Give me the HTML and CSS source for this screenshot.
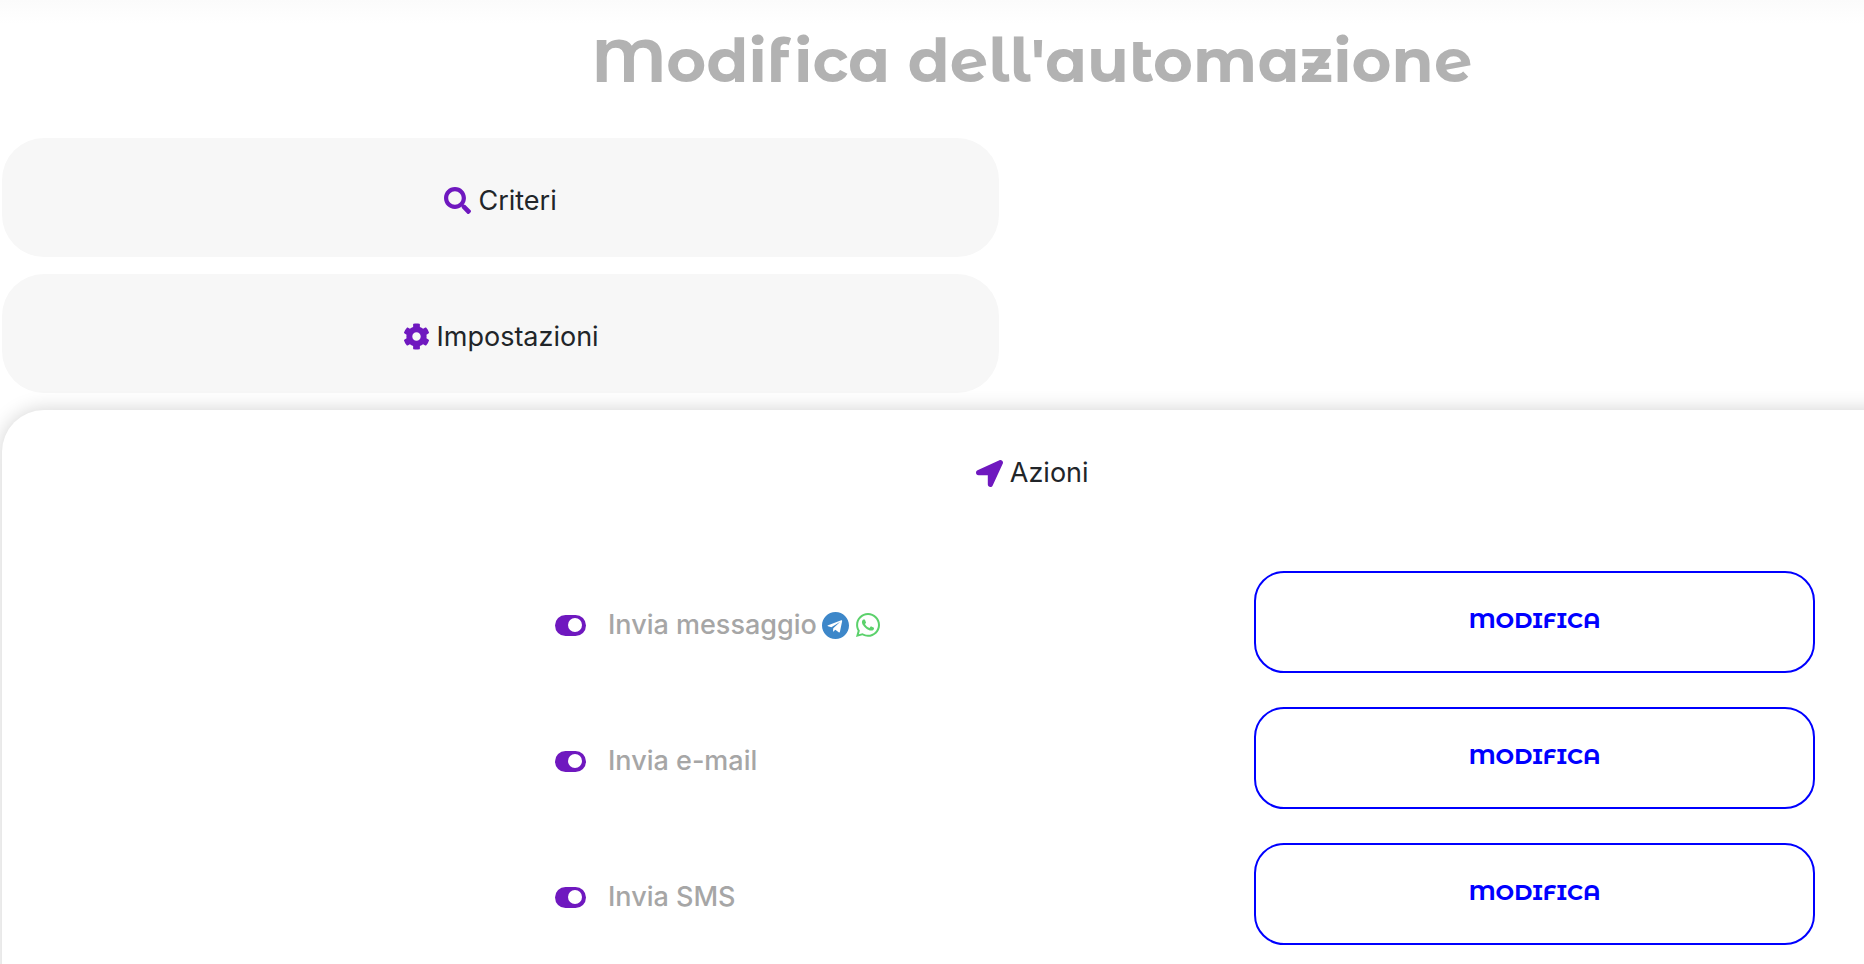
FILE: index.html
```html
<!DOCTYPE html>
<html lang="it">
<head>
    <meta charset="utf-8">
    <meta name="viewport" content="width=device-width, initial-scale=1">
    <title>Modifica dell'automazione</title>
    <link rel="stylesheet" href="styles.css">
</head>
<body>
<main class="page">
    <h1 class="page-title">Modifica dell'automazione</h1>

    <button type="button" class="tab">
        <svg class="icon" viewBox="0 0 512 512" aria-hidden="true"><path d="M505 442.7L405.3 343c-4.5-4.5-10.6-7-17-7H372c27.6-35.3 44-79.7 44-128C416 93.1 322.9 0 208 0S0 93.1 0 208s93.1 208 208 208c48.3 0 92.7-16.4 128-44v16.3c0 6.4 2.5 12.5 7 17l99.7 99.7c9.4 9.4 24.6 9.4 33.9 0l28.3-28.3c9.4-9.4 9.4-24.6.1-34zM208 336c-70.7 0-128-57.2-128-128 0-70.7 57.2-128 128-128 70.7 0 128 57.2 128 128 0 70.7-57.2 128-128 128z"/></svg>
        <span>Criteri</span>
    </button>

    <button type="button" class="tab">
        <svg class="icon" viewBox="0 0 512 512" aria-hidden="true"><path d="M487.4 315.7l-42.6-24.6c4.3-23.2 4.3-47 0-70.2l42.6-24.6c4.9-2.8 7.1-8.6 5.5-14-11.1-35.6-30-67.8-54.7-94.6-3.8-4.1-10-5.1-14.8-2.3L380.8 110c-17.9-15.4-38.5-27.3-60.8-35.1V25.8c0-5.6-3.9-10.5-9.4-11.7-36.7-8.2-74.3-7.8-109.2 0-5.5 1.2-9.4 6.1-9.4 11.7V75c-22.2 7.9-42.8 19.8-60.8 35.1L88.7 85.5c-4.9-2.8-11-1.9-14.8 2.3-24.7 26.7-43.6 58.9-54.7 94.6-1.7 5.4.6 11.2 5.5 14L67.3 221c-4.3 23.2-4.3 47 0 70.2l-42.6 24.6c-4.9 2.8-7.1 8.6-5.5 14 11.1 35.6 30 67.8 54.7 94.6 3.8 4.1 10 5.1 14.8 2.3l42.6-24.6c17.9 15.4 38.5 27.3 60.8 35.1v49.2c0 5.6 3.9 10.5 9.4 11.7 36.7 8.2 74.3 7.8 109.2 0 5.5-1.2 9.4-6.1 9.4-11.7v-49.2c22.2-7.9 42.8-19.8 60.8-35.1l42.6 24.6c4.9 2.8 11 1.9 14.8-2.3 24.7-26.7 43.6-58.9 54.7-94.6 1.5-5.5-.7-11.3-5.6-14.1zM256 336c-44.1 0-80-35.9-80-80s35.9-80 80-80 80 35.9 80 80-35.9 80-80 80z"/></svg>
        <span>Impostazioni</span>
    </button>

    <section class="panel">
        <h2 class="panel-title">
            <svg class="icon" viewBox="0 0 512 512" aria-hidden="true"><path d="M444.52 3.52L28.74 195.42c-47.97 22.39-31.98 92.75 19.19 92.75h175.91v175.91c0 51.17 70.36 67.17 92.75 19.19l191.9-415.78c15.99-38.39-25.59-79.97-63.97-63.97z"/></svg>
            <span>Azioni</span>
        </h2>

        <div class="action">
            <input type="checkbox" class="toggle" id="send-message" checked>
            <label class="action-label" for="send-message">Invia messaggio</label>
            <svg class="icon icon-telegram" viewBox="0 8 496 496" aria-hidden="true"><path d="M248 8C111 8 0 119 0 256s111 248 248 248 248-111 248-248S385 8 248 8zm121.8 169.9l-40.7 191.8c-3 13.6-11.1 16.9-22.4 10.5l-62-45.7-29.9 28.8c-3.3 3.3-6.1 6.1-12.5 6.1l4.4-63.1 114.9-103.8c5-4.4-1.1-6.9-7.7-2.5l-142 89.4-61.2-19.1c-13.3-4.2-13.6-13.3 2.8-19.7l239.1-92.2c11.1-4 20.8 2.7 17.2 19.5z"/></svg>
            <svg class="icon icon-whatsapp" viewBox="0 32 448 448" aria-hidden="true"><path d="M380.9 97.1C339 55.1 283.2 32 223.9 32c-122.4 0-222 99.6-222 222 0 39.1 10.2 77.3 29.6 111L0 480l117.7-30.9c32.4 17.7 68.9 27 106.1 27h.1c122.3 0 224.1-99.6 224.1-222 0-59.3-25.2-115-67.1-157zm-157 341.6c-33.2 0-65.7-8.9-94-25.7l-6.7-4-69.8 18.3L72 359.2l-4.4-7c-18.5-29.4-28.2-63.3-28.2-98.2 0-101.7 82.8-184.5 184.6-184.5 49.3 0 95.6 19.2 130.4 54.1 34.8 34.9 56.2 81.2 56.1 130.5 0 101.8-84.9 184.6-186.6 184.6zm101.2-138.2c-5.5-2.8-32.8-16.2-37.9-18-5.1-1.9-8.8-2.8-12.5 2.8-3.7 5.6-14.3 18-17.6 21.8-3.2 3.7-6.5 4.2-12 1.4-32.6-16.3-54-29.1-75.5-66-5.7-9.8 5.7-9.1 16.3-30.3 1.8-3.7.9-6.9-.5-9.7-1.4-2.8-12.5-30.1-17.1-41.2-4.5-10.8-9.1-9.3-12.5-9.5-3.2-.2-6.9-.2-10.6-.2-3.7 0-9.7 1.4-14.8 6.9-5.1 5.6-19.4 19-19.4 46.3 0 27.3 19.9 53.7 22.6 57.4 2.8 3.7 39.1 59.7 94.8 83.8 35.2 15.2 49 16.5 66.6 13.9 10.7-1.6 32.8-13.4 37.4-26.4 4.6-13 4.6-24.1 3.2-26.4-1.3-2.5-5-3.9-10.5-6.6z"/></svg>
            <button type="button" class="btn-edit">MODIFICA</button>
        </div>
        <div class="action">
            <input type="checkbox" class="toggle" id="send-mail" checked>
            <label class="action-label" for="send-mail">Invia e-mail</label>
            <button type="button" class="btn-edit">MODIFICA</button>
        </div>
        <div class="action">
            <input type="checkbox" class="toggle" id="send-sms" checked>
            <label class="action-label" for="send-sms">Invia SMS</label>
            <button type="button" class="btn-edit">MODIFICA</button>
        </div>
    </section>
</main>
</body>
</html>
```
FILE: styles.css
```css
* {
    box-sizing: border-box;
}
body {
    margin: 0;
    overflow: hidden;
    background: #fff;
    color: #212529;
    font-family: Inter, "Liberation Sans", sans-serif;
    font-size: 27px;
    line-height: 36px;
}
/* wider than the window, the right part is cut off */
.page {
    width: calc(110% + 12px);
    padding: 0 0 0 2px;
    background: linear-gradient(#fbfbfb, #fff 24px);
}
.page-title {
    margin: 0;
    padding: 20px 0 38px;
    color: #b2b2b2;
    font-family: "Montserrat Alternates", Inter, sans-serif;
    font-size: 61px;
    font-weight: 700;
    line-height: 80px;
    text-align: center;
}
.tab {
    display: flex;
    align-items: center;
    justify-content: center;
    gap: 7px;
    width: 48.4%;
    height: 119px;
    margin: 0 0 17px;
    padding: 6px 0 0;
    border: 0;
    border-radius: 42px;
    background: #f7f7f7;
    color: inherit;
    font: inherit;
    cursor: pointer;
}
.icon {
    flex: none;
    width: 27px;
    height: 27px;
    fill: #6f18bf;
}
.panel {
    padding: 45px 0 20px;
    border-radius: 42px 42px 0 0;
    background: #fff;
    box-shadow: 0 0 20px rgba(0, 0, 0, .18);
}
.panel-title {
    display: flex;
    align-items: center;
    justify-content: center;
    gap: 7px;
    margin: 0 0 80px;
    font-size: 27px;
    font-weight: 400;
    line-height: 36px;
}
.action {
    display: flex;
    align-items: center;
    margin-bottom: 34px;
    padding: 0 12% 0 553px;
}
.toggle {
    flex: none;
    display: flex;
    align-items: center;
    justify-content: flex-end;
    width: 31px;
    height: 21px;
    margin: 6px 22px 0 0;
    padding-right: 4px;
    border-radius: 11px;
    background: #6f18bf;
    appearance: none;
    cursor: pointer;
}
.toggle::before {
    content: "";
    width: 14px;
    height: 14px;
    border-radius: 50%;
    background: #fff;
}
.toggle:not(:checked) {
    justify-content: flex-start;
    padding: 0 0 0 4px;
    background: #aaa;
}
.action-label {
    padding-top: 6px;
    color: #a6a6a6;
    font-weight: 500;
}
.icon-telegram {
    margin: 6px 7px 0 5px;
    fill: #3d87c9;
}
.icon-whatsapp {
    width: 24px;
    height: 24px;
    margin-top: 6px;
    fill: #5bd16b;
}
.btn-edit {
    width: 561px;
    height: 102px;
    margin-left: auto;
    padding: 0 0 2px;
    border: 2px solid #00f;
    border-radius: 30px;
    background: #fff;
    color: #00f;
    font-family: "Montserrat Alternates", Inter, sans-serif;
    font-size: 22px;
    font-weight: 700;
    line-height: 28px;
    cursor: pointer;
}
```
